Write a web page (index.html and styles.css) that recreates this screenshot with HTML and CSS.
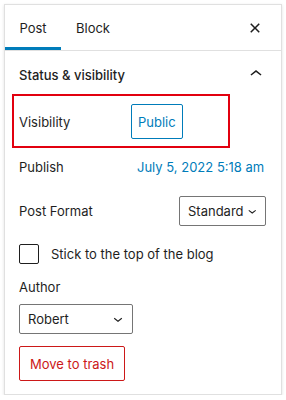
FILE: index.html
```html
<!DOCTYPE html>
<html lang="en">
  <head>
    <meta charset="UTF-8" />
    <meta name="viewport" content="width=device-width, initial-scale=1.0" />
    <title>Post settings</title>
    <link rel="stylesheet" href="styles.css">
  </head>
  <body>
    <div class="sidebar">
      <div class="sidebar-tabs">
        <button class="tab tab-post is-active" type="button">Post</button>
        <button class="tab tab-block" type="button">Block</button>
        <button class="close-btn" type="button" aria-label="Close settings">
          <svg viewBox="0 0 24 24" width="24" height="24">
            <path d="M12 13.06l3.712 3.713 1.061-1.06L13.061 12l3.712-3.712-1.06-1.06L12 10.938 8.288 7.227l-1.061 1.06L10.939 12l-3.712 3.712 1.06 1.061L12 13.061z" />
          </svg>
        </button>
      </div>

      <div class="panel">
        <div class="panel-title">
          <span>Status &amp; visibility</span>
          <svg viewBox="0 0 24 24" width="24" height="24">
            <path d="M6.5 12.4L12 8l5.5 4.4-.9 1.2L12 10l-4.6 3.6-1-1.2z" />
          </svg>
        </div>

        <div class="panel-row row-visibility">
          <span class="row-label">Visibility</span>
          <button class="btn-outline" type="button">Public</button>
        </div>

        <div class="panel-row row-publish">
          <span class="row-label">Publish</span>
          <button class="btn-link" type="button">July 5, 2022 5:18 am</button>
        </div>

        <div class="panel-row row-format">
          <span class="row-label">Post Format</span>
          <div class="select select-format">
            <span>Standard</span>
            <svg viewBox="0 0 24 24" width="18" height="18">
              <path d="M17.5 11.6L12 16l-5.5-4.4.9-1.2L12 14l4.6-3.6 1 1.2z" />
            </svg>
          </div>
        </div>

        <label class="sticky-row">
          <span class="checkbox"></span>
          <span>Stick to the top of the blog</span>
        </label>

        <div class="author-label">Author</div>
        <div class="select select-author">
          <span>Robert</span>
          <svg viewBox="0 0 24 24" width="18" height="18">
            <path d="M17.5 11.6L12 16l-5.5-4.4.9-1.2L12 14l4.6-3.6 1 1.2z" />
          </svg>
        </div>

        <button class="btn-trash" type="button">Move to trash</button>
      </div>
    </div>
  </body>
</html>
```

FILE: styles.css
```css
* {
  padding: 0;
  margin: 0;
  box-sizing: border-box;
}

body {
  font-family: Inter, "Noto Sans", sans-serif;
  font-size: 13px;
  line-height: 18px;
  color: #1e1e1e;
  background: #fff;
}

button {
  font: inherit;
  background: none;
  border: none;
  color: inherit;
  cursor: pointer;
  white-space: nowrap;
}

.sidebar {
  margin: 4px 0 0 4px;
  width: 278px;
  height: 391px;
  border: 1px solid #e0e0e0;
  box-shadow: 0 1px 3px rgba(0, 0, 0, 0.12);
  background: #fff;
}

/* Tabs */
.sidebar-tabs {
  display: flex;
  align-items: center;
  height: 46px;
  border-bottom: 1px solid #e0e0e0;
}

.tab {
  height: 45px;
  text-align: center;
}

.tab-post {
  width: 56px;
}

.tab-block {
  width: 64px;
}

.tab.is-active {
  box-shadow: inset 0 -3px 0 #007cba;
}

.close-btn {
  margin-left: auto;
  margin-right: 14px;
  width: 24px;
  height: 24px;
}

.close-btn svg,
.panel-title svg {
  display: block;
  fill: #1e1e1e;
}

/* Panel */
.panel {
  padding: 0 15px 0 14px;
}

.panel-title {
  display: flex;
  justify-content: space-between;
  height: 43px;
  padding-top: 15px;
  font-weight: 500;
}

.panel-title svg {
  margin-top: -4px;
  margin-right: -2px;
}

.panel-row {
  display: flex;
  align-items: center;
}

.row-label {
  width: 112px;
  flex-shrink: 0;
}

.row-visibility {
  width: 218px;
  margin-left: -7px;
  padding: 8px 5px 7px;
  border: 2px solid #e2000f;
}

.btn-outline {
  height: 35px;
  padding: 0 6px;
  border: 1px solid #007cba;
  border-radius: 2px;
  color: #007cba;
}

.row-publish {
  height: 36px;
  margin-top: 1px;
  justify-content: space-between;
}

.btn-link {
  height: 36px;
  padding: 0 6px;
  color: #007cba;
}

.row-format {
  height: 36px;
  margin-top: 8px;
  justify-content: space-between;
}

.select {
  display: flex;
  align-items: center;
  justify-content: space-between;
  height: 30px;
  border: 1px solid #757575;
  border-radius: 2px;
  font-size: 13px;
}

.select svg {
  fill: #1e1e1e;
  display: block;
}

.select-format {
  width: 87px;
  padding: 0 5px 0 8px;
}

.sticky-row {
  display: flex;
  align-items: center;
  gap: 12px;
  margin-top: 15px;
  height: 20px;
}

.checkbox {
  width: 20px;
  height: 20px;
  border: 1px solid #1e1e1e;
  border-radius: 2px;
}

.author-label {
  margin-top: 14px;
}

.select-author {
  width: 114px;
  margin-top: 8px;
  padding: 0 5px 0 8px;
}

.btn-trash {
  display: block;
  height: 35px;
  margin-top: 12px;
  padding: 0 10px;
  border: 1px solid #cc1818;
  border-radius: 2px;
  color: #cc1818;
}
```
